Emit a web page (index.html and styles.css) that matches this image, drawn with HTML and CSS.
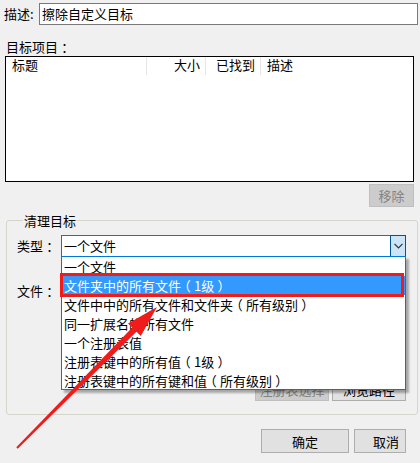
FILE: index.html
```html
<!DOCTYPE html>
<html lang="zh">
<head>
<meta charset="utf-8">
<link rel="stylesheet" href="styles.css">
</head>
<body>
<div class="page">
  <div class="desc-row">
    <span class="desc-label">描述:</span>
    <div class="textbox">擦除自定义目标</div>
  </div>
  <div class="section-label">目标项目<span class="pp">：</span></div>
  <div class="listview">
    <div class="lv-header">
      <div class="col col-title">标题</div>
      <div class="col col-size">大小</div>
      <div class="col col-found">已找到</div>
      <div class="col col-desc">描述</div>
    </div>
  </div>
  <div class="remove-row">
    <div class="btn btn-disabled btn-remove">移除</div>
  </div>
  <fieldset class="group">
    <legend class="group-title">清理目标</legend>
    <div class="field-row">
      <span class="field-label">类型<span class="pp">：</span></span>
      <div class="combo-wrap">
        <div class="combo">
          <span class="combo-text">一个文件</span>
          <span class="combo-btn">
            <svg width="9" height="6" viewBox="0 0 9 6"><path d="M0.5 0.8 L4.5 4.8 L8.5 0.8" fill="none" stroke="#333" stroke-width="1.2"/></svg>
          </span>
        </div>
        <div class="dropdown">
          <div class="dd-item">一个文件</div>
          <div class="dd-item dd-selected">文件夹中的所有文件<span class="pp">（</span>1级<span class="pp">）</span></div>
          <div class="dd-item">文件中中的所有文件和文件夹<span class="pp">（</span>所有级别<span class="pp">）</span></div>
          <div class="dd-item">同一扩展名的所有文件</div>
          <div class="dd-item">一个注册表值</div>
          <div class="dd-item">注册表键中的所有值<span class="pp">（</span>1级<span class="pp">）</span></div>
          <div class="dd-item">注册表键中的所有键和值<span class="pp">（</span>所有级别<span class="pp">）</span></div>
          <div class="dd-mark"></div>
        </div>
      </div>
    </div>
    <div class="field-row file-row">
      <span class="field-label">文件<span class="pp">：</span></span>
    </div>
    <div class="group-buttons">
      <div class="btn btn-disabled btn-mid">注册表选择</div>
      <div class="btn btn-mid">浏览路径</div>
    </div>
  </fieldset>
  <div class="dialog-buttons">
    <div class="btn btn-ok">确定</div>
    <div class="btn btn-cancel">取消</div>
  </div>
  <svg class="arrow" width="420" height="463" viewBox="0 0 420 463">
    <polygon fill="#f01c1c" points="157,307 140.8,336 136.5,331.8 17.7,448.7 16.3,447.3 132.3,327.6 128,323.4"/>
  </svg>
</div>
</body>
</html>
```
FILE: styles.css
```css
html, body {
  margin: 0;
  padding: 0;
}
body {
  width: 420px;
  height: 463px;
  overflow: hidden;
  background: #f0f0f0;
  font-family: "Noto Sans CJK SC", "Noto Sans", sans-serif;
  font-size: 13px;
  color: #000;
}
.page {
  position: relative;
  width: 420px;
  height: 463px;
}
.pp {
  font-feature-settings: "halt";
  margin: 0 0.25em;
}
.desc-row {
  display: flex;
  align-items: center;
  padding: 3px 2px 0 4px;
}
.desc-label {
  width: 35px;
  line-height: 22px;
}
.textbox {
  flex: 1;
  height: 22px;
  box-sizing: border-box;
  border: 1px solid #7a7a7a;
  background: #fff;
  padding-left: 2px;
  line-height: 20px;
}
.section-label {
  margin: 13px 0 0 6px;
  line-height: 17px;
}
.listview {
  margin: 1px 6px 0 5px;
  height: 126px;
  box-sizing: border-box;
  border: 1px solid #000;
  background: #fff;
}
.lv-header {
  display: flex;
  height: 18px;
  line-height: 16px;
}
.col {
  box-sizing: border-box;
  border-right: 1px solid #e5e5e5;
  height: 18px;
}
.col-title {
  width: 141px;
  padding-left: 6px;
}
.col-size {
  width: 59px;
  text-align: right;
  padding-right: 5px;
}
.col-found {
  width: 55px;
  text-align: right;
  padding-right: 5px;
}
.col-desc {
  flex: 1;
  border-right: none;
  padding-left: 6px;
}
.remove-row {
  display: flex;
  justify-content: flex-end;
  margin: 2px 6px 0 0;
}
.btn {
  box-sizing: border-box;
  height: 23px;
  border: 1px solid #adadad;
  background: #e1e1e1;
  display: flex;
  align-items: center;
  justify-content: center;
  line-height: 21px;
  white-space: nowrap;
}
.btn-disabled {
  background: #cccccc;
  border-color: #bfbfbf;
  color: #838383;
}
.btn-remove {
  width: 45px;
}
.group {
  margin: 6px 2px 0 6px;
  padding: 7px 11px 13px 10px;
  border: 1px solid #d5d5cb;
  border-radius: 3px;
  min-width: 0;
}
.group-title {
  padding: 0 1px;
  margin-left: 6px;
  line-height: 15px;
}
.field-row {
  display: flex;
  align-items: center;
  height: 22px;
}
.field-label {
  width: 44px;
  line-height: 22px;
  white-space: nowrap;
}
.combo-wrap {
  position: relative;
  width: 345px;
  height: 22px;
}
.combo {
  box-sizing: border-box;
  height: 22px;
  border: 1px solid #0078d7;
  background: #fff;
  display: flex;
  align-items: center;
}
.combo-text {
  flex: 1;
  padding-left: 2px;
  line-height: 20px;
}
.combo-btn {
  box-sizing: border-box;
  width: 16px;
  height: 22px;
  margin: -1px -1px -1px 0;
  border: 1px solid #005499;
  background: #cce4f7;
  display: flex;
  align-items: center;
  justify-content: center;
}
.dropdown {
  position: absolute;
  left: 0;
  top: 21px;
  width: 345px;
  height: 134px;
  box-sizing: border-box;
  border: 1px solid #0078d7;
  background: #fff;
  box-shadow: 3px 3px 2px rgba(0, 0, 0, 0.3);
  z-index: 5;
}
.dd-item {
  height: 19px;
  line-height: 19px;
  padding-left: 2px;
  white-space: nowrap;
}
.dd-selected {
  background: #3399ff;
  color: #fff;
}
.dd-mark {
  position: absolute;
  left: -2px;
  top: 16px;
  width: 344px;
  height: 24px;
  box-sizing: border-box;
  border: 3px solid #f01c1c;
}
.file-row {
  margin-top: 23px;
}
.group-buttons {
  display: flex;
  justify-content: flex-end;
  gap: 3px;
  margin-top: 76px;
}
.btn-mid {
  width: 74px;
}
.dialog-buttons {
  display: flex;
  justify-content: flex-end;
  gap: 5px;
  margin: 14px 14px 0 0;
}
.btn-ok {
  width: 88px;
  height: 24px;
}
.btn-cancel {
  width: 52px;
  height: 24px;
  justify-content: flex-end;
  padding-right: 6px;
}
.arrow {
  position: absolute;
  left: 0;
  top: 0;
  pointer-events: none;
  z-index: 10;
}
```
